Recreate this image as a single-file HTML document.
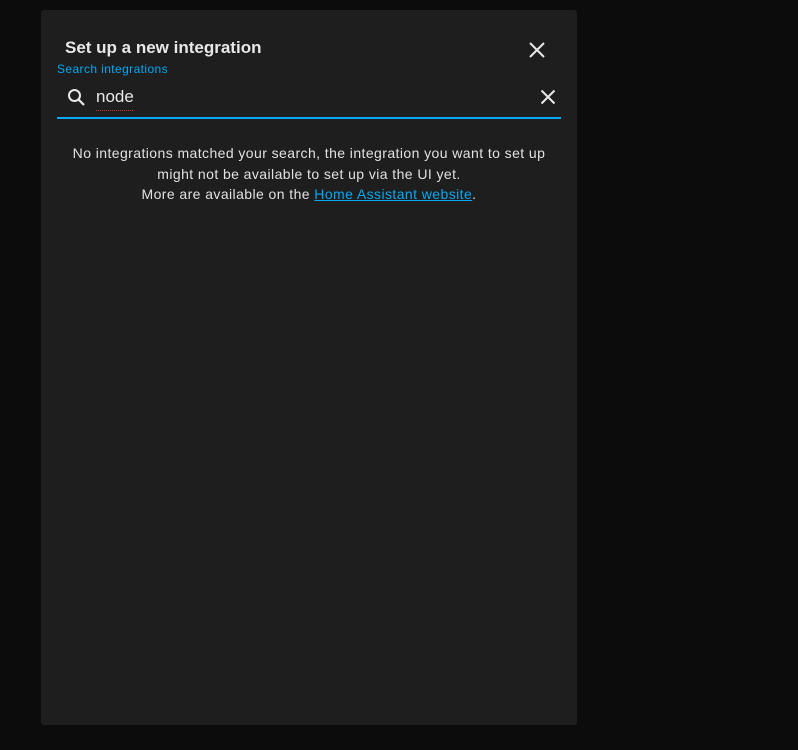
<!DOCTYPE html>
<html><head><style>
html,body{margin:0;padding:0;background:#0c0c0c;width:798px;height:750px;overflow:hidden;font-family:"Liberation Sans",sans-serif}
.dlg{position:absolute;left:41px;top:10px;width:536px;height:715px;background:#1e1e1e;border-radius:3px}
.title{position:absolute;left:24px;top:28px;font-size:17px;font-weight:bold;color:#e8e8e8}
.close{position:absolute;left:487px;top:31px}
.lbl{position:absolute;left:16px;top:52px;font-size:12px;color:#03a9f4;letter-spacing:0.4px}
.search{position:absolute;left:26px;top:78px}
.q{position:absolute;left:55px;top:77px;font-size:17px;color:#e8e8e8}
.sq{position:absolute;left:55px;top:98px;width:37px;height:2px;border-bottom:1px dotted #d33}
.clr{position:absolute;left:499px;top:79px}
.line{position:absolute;left:16px;top:107px;width:504px;height:2px;background:#03a9f4}
.msg{position:absolute;left:16px;top:133px;width:504px;text-align:center;font-size:14px;line-height:20.5px;color:#e1e1e1;letter-spacing:0.42px}
.msg a{color:#03a9f4;text-decoration:underline}
</style></head><body>
<div class="dlg">
<div class="title">Set up a new integration</div>
<svg class="close" width="18" height="18" viewBox="0 0 18 18"><path d="M2 2L16 16M16 2L2 16" stroke="#e8e8e8" stroke-width="2"/></svg>
<div class="lbl">Search integrations</div>
<svg class="search" width="20" height="20" viewBox="0 0 20 20"><circle cx="7.5" cy="7.5" r="5.5" fill="none" stroke="#e8e8e8" stroke-width="2"/><path d="M11.5 11.5L17 17" stroke="#e8e8e8" stroke-width="2.2"/></svg>
<div class="q">node</div>
<div class="sq"></div>
<svg class="clr" width="16" height="16" viewBox="0 0 16 16"><path d="M1.5 1.5L14.5 14.5M14.5 1.5L1.5 14.5" stroke="#e8e8e8" stroke-width="2"/></svg>
<div class="line"></div>
<div class="msg">No integrations matched your search, the integration you want to set up<br>might not be available to set up via the UI yet.<br>More are available on the <a>Home Assistant website</a>.</div>
</div>
</body></html>
